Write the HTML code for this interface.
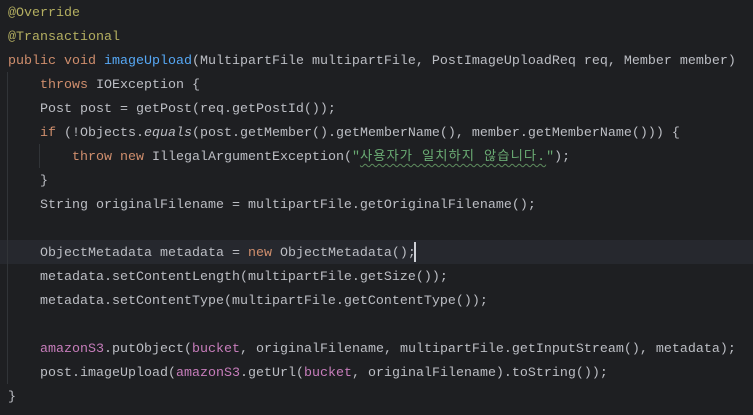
<!DOCTYPE html>
<html><head><meta charset="utf-8"><style>
html,body{margin:0;padding:0;background:#1e1f22;}
body{width:753px;height:415px;overflow:hidden;position:relative;font-family:"Liberation Mono","DejaVu Sans Mono",monospace;font-size:13.33px;color:#bcbec4;}
.l{position:absolute;left:8px;height:24px;line-height:24px;white-space:pre;margin-top:2px;}
.cur{position:absolute;left:0;top:240px;width:753px;height:24px;background:#26282e;}
.g{position:absolute;width:1px;background:#313438;}
.a{color:#b3ae60}.k{color:#cf8e6d}.m{color:#56a8f5}.s{color:#6aab73}.f{color:#c77dbb}.i{font-style:italic}
.ko{font-family:"Liberation Mono","Noto Sans CJK KR",monospace;letter-spacing:1px;text-decoration:underline wavy #5f8d5f;text-decoration-thickness:1px;text-underline-offset:3px}
.caret{position:absolute;left:414px;top:242px;width:2px;height:20px;background:#ced0d6;}
</style></head><body>
<div class="cur"></div>
<div class="g" style="left:7px;top:72px;height:312px"></div>
<div class="g" style="left:39px;top:144px;height:24px"></div>
<div class="l" style="top:0"><span class="a">@Override</span></div>
<div class="l" style="top:24px"><span class="a">@Transactional</span></div>
<div class="l" style="top:48px"><span class="k">public void </span><span class="m">imageUpload</span>(MultipartFile multipartFile, PostImageUploadReq req, Member member)</div>
<div class="l" style="top:72px">    <span class="k">throws </span>IOException {</div>
<div class="l" style="top:96px">    Post post = getPost(req.getPostId());</div>
<div class="l" style="top:120px">    <span class="k">if </span>(!Objects.<span class="i">equals</span>(post.getMember().getMemberName(), member.getMemberName())) {</div>
<div class="l" style="top:144px">        <span class="k">throw new </span>IllegalArgumentException(<span class="s">"<span class="ko">사용자가 일치하지 않습니다.</span>"</span>);</div>
<div class="l" style="top:168px">    }</div>
<div class="l" style="top:192px">    String originalFilename = multipartFile.getOriginalFilename();</div>
<div class="l" style="top:240px">    ObjectMetadata metadata = <span class="k">new </span>ObjectMetadata();</div>
<div class="l" style="top:264px">    metadata.setContentLength(multipartFile.getSize());</div>
<div class="l" style="top:288px">    metadata.setContentType(multipartFile.getContentType());</div>
<div class="l" style="top:336px">    <span class="f">amazonS3</span>.putObject(<span class="f">bucket</span>, originalFilename, multipartFile.getInputStream(), metadata);</div>
<div class="l" style="top:360px">    post.imageUpload(<span class="f">amazonS3</span>.getUrl(<span class="f">bucket</span>, originalFilename).toString());</div>
<div class="l" style="top:384px">}</div>
<div class="caret"></div>
</body></html>
